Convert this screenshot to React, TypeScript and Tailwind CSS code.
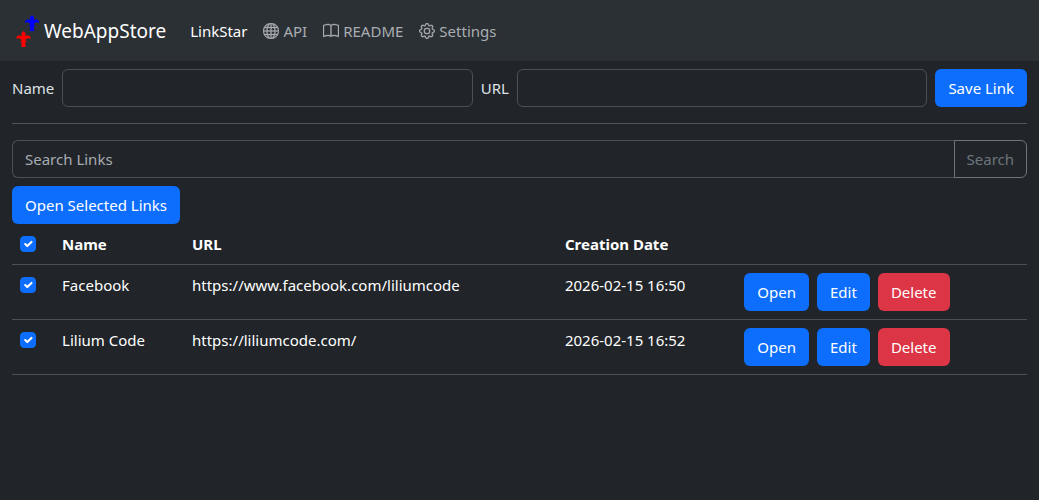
import { useState } from 'react';
import type { ReactNode } from 'react';
import { BsBook, BsGear, BsGlobe } from 'react-icons/bs';

const links = [
  { id: 1, name: 'Facebook', url: 'https://www.facebook.com/liliumcode', created: '2026-02-15 16:50' },
  { id: 2, name: 'Lilium Code', url: 'https://liliumcode.com/', created: '2026-02-15 16:52' },
];

function Logo() {
  const lily =
    'M7.5 0 L9.6 2.2 L9.2 5.4 Q10.5 4.2 12.2 4.4 Q14.6 4.8 15 7.4 H13 L12.2 6.9 Q11 7 10.2 8.6 H9.4 V9.6 H10.2 V11.4 H9.4 V14 L9.8 16 H5.2 L5.6 14 V11.4 H4.8 V9.6 H5.6 V8.6 H4.8 Q4 7 2.8 6.9 L2 7.4 H0 Q0.4 4.8 2.8 4.4 Q4.5 4.2 5.8 5.4 L5.4 2.2 Z';
  return (
    <svg className="h-8 w-8" viewBox="0 0 32 32" aria-hidden="true">
      <path d={lily} transform="translate(12.5 0)" fill="#0000ff" />
      <path d={lily} transform="translate(4 16)" fill="#ff0000" />
    </svg>
  );
}

function NavLink({ active = false, children }: { active?: boolean; children: ReactNode }) {
  return (
    <a
      href="#"
      aria-current={active ? 'page' : undefined}
      className={`flex items-center gap-1 px-2 py-2 ${active ? 'text-white' : 'text-[#a9adb1] hover:text-gray-200'}`}
    >
      {children}
    </a>
  );
}

function Button({ danger = false, submit = false, children }: { danger?: boolean; submit?: boolean; children: ReactNode }) {
  return (
    <button
      type={submit ? 'submit' : 'button'}
      className={`h-[38px] shrink-0 rounded-md px-[13px] whitespace-nowrap text-white ${
        danger ? 'bg-[#dc3545] hover:bg-[#bb2d3b]' : 'bg-[#0d6efd] hover:bg-[#0b5ed7]'
      }`}
    >
      {children}
    </button>
  );
}

function Checkbox({ label, checked, onChange }: { label: string; checked: boolean; onChange: () => void }) {
  return (
    <span className="mt-1 grid h-4 w-4">
      <input
        type="checkbox"
        aria-label={label}
        checked={checked}
        onChange={onChange}
        className="peer col-start-1 row-start-1 h-4 w-4 appearance-none rounded border border-[#495057] checked:border-[#0d6efd] checked:bg-[#0d6efd]"
      />
      <svg
        className="pointer-events-none invisible col-start-1 row-start-1 m-px h-3.5 w-3.5 peer-checked:visible"
        viewBox="0 0 20 20"
        fill="none"
        stroke="#fff"
        strokeWidth="3"
        strokeLinecap="round"
        strokeLinejoin="round"
      >
        <path d="m6 10 3 3 6-6" />
      </svg>
    </span>
  );
}

export default function App() {
  const [selected, setSelected] = useState<number[]>(links.map((l) => l.id));
  const allSelected = selected.length === links.length;

  const toggle = (id: number) =>
    setSelected((prev) => (prev.includes(id) ? prev.filter((x) => x !== id) : [...prev, id]));

  return (
    <div className="min-h-screen bg-[#212529] font-['Noto_Sans','Open_Sans',sans-serif] text-[15px] leading-6 text-[#dee2e6]">
      <nav className="flex h-[61px] items-center gap-4 bg-[#2b3035] px-3">
        <a href="#" className="flex items-center text-[19px] leading-8 text-white">
          <Logo />
          WebAppStore
        </a>
        <div className="flex">
          <NavLink active>LinkStar</NavLink>
          <NavLink>
            <BsGlobe className="h-4 w-4 stroke-current stroke-[0.3]" />
            API
          </NavLink>
          <NavLink>
            <BsBook className="h-4 w-4 stroke-current stroke-[0.3]" />
            README
          </NavLink>
          <NavLink>
            <BsGear className="h-4 w-4 stroke-current stroke-[0.3]" />
            Settings
          </NavLink>
        </div>
      </nav>

      <main className="px-3 pt-2">
        <form className="flex items-center gap-2" onSubmit={(e) => e.preventDefault()}>
          <label htmlFor="name">Name</label>
          <input
            id="name"
            type="text"
            className="h-[38px] min-w-0 flex-1 rounded-md border border-[#495057] px-3"
          />
          <label htmlFor="url">URL</label>
          <input
            id="url"
            type="text"
            className="h-[38px] min-w-0 flex-1 rounded-md border border-[#495057] px-3"
          />
          <Button submit>Save Link</Button>
        </form>

        <hr className="my-4 border-[#505458]" />

        <form className="mb-2 flex" onSubmit={(e) => e.preventDefault()}>
          <input
            type="search"
            aria-label="Search Links"
            placeholder="Search Links"
            className="h-[38px] min-w-0 flex-1 rounded-l-md border border-r-0 border-[#495057] px-3 placeholder:text-[#a7acb1]"
          />
          <button type="submit" className="h-[38px] rounded-r-md border border-[#6c757d] px-3 text-[#6c757d]">
            Search
          </button>
        </form>

        <Button>Open Selected Links</Button>

        <table className="w-full text-left text-white">
          <thead>
            <tr className="border-b border-[#4d5154] align-top">
              <th className="p-2">
                <Checkbox
                  label="Select all links"
                  checked={allSelected}
                  onChange={() => setSelected(allSelected ? [] : links.map((l) => l.id))}
                />
              </th>
              <th className="p-2">Name</th>
              <th className="p-2">URL</th>
              <th className="p-2">Creation Date</th>
              <th className="p-2" />
            </tr>
          </thead>
          <tbody>
            {links.map((link) => (
              <tr key={link.id} className="border-b border-[#4d5154] align-top">
                <td className="p-2">
                  <Checkbox
                    label={`Select ${link.name}`}
                    checked={selected.includes(link.id)}
                    onChange={() => toggle(link.id)}
                  />
                </td>
                <td className="p-2">{link.name}</td>
                <td className="p-2">{link.url}</td>
                <td className="p-2">{link.created}</td>
                <td className="p-2">
                  <div className="flex gap-2">
                    <Button>Open</Button>
                    <Button>Edit</Button>
                    <Button danger>Delete</Button>
                  </div>
                </td>
              </tr>
            ))}
          </tbody>
        </table>
      </main>
    </div>
  );
}
